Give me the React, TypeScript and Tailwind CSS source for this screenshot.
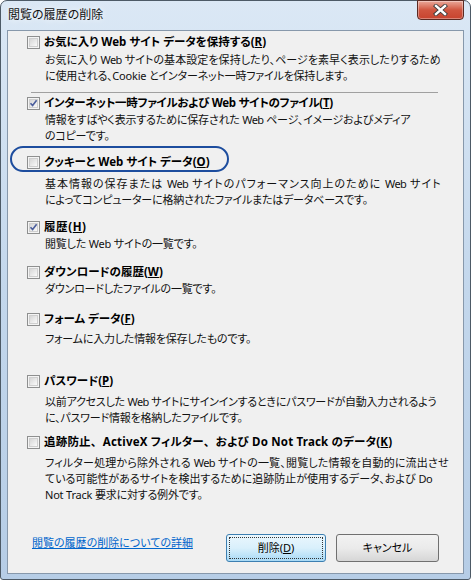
import React from 'react';

interface Line {
  text: string;
  // full lines are stretched to the width they have in the dialog
  fit?: string;
}

interface Item {
  label: React.ReactNode;
  labelCls?: string;
  desc: Line[];
  checked?: boolean;
  top: number;
  descTop: number;
  ring?: boolean;
}

const Check = ({ checked }: { checked?: boolean }) => (
  <span className="relative w-[13px] h-[13px] shrink-0 border border-[#8e8f8f] bg-[#f4f4f4]">
    <span className="absolute inset-[1px] border border-[#cfcfcf] bg-gradient-to-br from-[#d6d6d6] to-[#fafafa]" />
    {checked && (
      <svg className="absolute inset-0" width="11" height="11" viewBox="0 0 11 11">
        <path d="M2.5 5.2 L4.6 7.6 L8.6 2.2" fill="none" stroke="#4b5e9c" strokeWidth="1.6" />
      </svg>
    )}
  </span>
);

const Comma = () => <span className="mr-[6px]">、</span>;

const items: Item[] = [
  {
    label: <>お気に入り Web サイト データを保持する(<u>R</u>)</>,
    desc: [
      { text: 'お気に入り Web サイトの基本設定を保持したり、ページを素早く表示したりするため', fit: 'w-[395px]' },
      { text: 'に使用される、Cookie とインターネット一時ファイルを保持します。' },
    ],
    top: 3,
    descTop: 2,
  },
  {
    label: <>インターネット一時ファイルおよび Web サイトのファイル(<u>T</u>)</>,
    labelCls: 'tracking-[-0.3px]',
    desc: [
      { text: '情報をすばやく表示するために保存された Web ページ、イメージおよびメディア', fit: 'w-[365px]' },
      { text: 'のコピーです。' },
    ],
    checked: true,
    top: 2,
    descTop: 1,
  },
  {
    label: <>クッキーと Web サイト データ(<u>O</u>)</>,
    desc: [
      { text: '基本情報の保存または Web サイトのパフォーマンス向上のために Web サイト', fit: 'w-[395px]' },
      { text: 'によってコンピューターに格納されたファイルまたはデータベースです。' },
    ],
    top: 10,
    descTop: 6,
    ring: true,
  },
  {
    label: <>履歴(<u>H</u>)</>,
    labelCls: 'tracking-[0.6px]',
    desc: [{ text: '閲覧した Web サイトの一覧です。' }],
    checked: true,
    top: 11,
    descTop: 1,
  },
  {
    label: <>ダウンロードの履歴(<u>W</u>)</>,
    desc: [{ text: 'ダウンロードしたファイルの一覧です。' }],
    top: 12,
    descTop: 1,
  },
  {
    label: <>フォーム データ(<u>F</u>)</>,
    desc: [{ text: 'フォームに入力した情報を保存したものです。' }],
    top: 14,
    descTop: 4,
  },
  {
    label: <>パスワード(<u>P</u>)</>,
    desc: [
      { text: '以前アクセスした Web サイトにサインインするときにパスワードが自動入力されるよう', fit: 'w-[391px]' },
      { text: 'に、パスワード情報を格納したファイルです。' },
    ],
    top: 26,
    descTop: 5,
  },
  {
    label: <>追跡防止<Comma />ActiveX フィルター<Comma />および Do Not Track のデータ(<u>K</u>)</>,
    labelCls: 'tracking-[0.2px]',
    desc: [
      { text: 'フィルター処理から除外される Web サイトの一覧、閲覧した情報を自動的に流出させ', fit: 'w-[403px]' },
      { text: 'ている可能性があるサイトを検出するために追跡防止が使用するデータ、および Do', fit: 'w-[387px]' },
      { text: 'Not Track 要求に対する例外です。' },
    ],
    top: 8,
    descTop: 5,
  },
];

export default function App() {
  return (
    <div className="w-[471px] h-[580px] overflow-hidden bg-white">
      <div className="relative w-[471px] h-[580px] rounded-t-[7px] rounded-b-[3px] border border-[#4d5a66] bg-gradient-to-b from-[#dbe8f5] via-[#c3d7ec] to-[#b6cde6] font-['Noto_Sans','Noto_Sans_CJK_JP',sans-serif] [font-feature-settings:'palt'] text-[11px] text-black">
        {/* title bar */}
        <div className="h-[29px] flex items-start pl-[7px] pt-[5px]">
          <span className="text-[12px] leading-[17px] text-[#111] [text-shadow:0_0_6px_#ffffff]">閲覧の履歴の削除</span>
        </div>
        <div className="absolute right-[6px] top-[-1px] w-[47px] h-[20px] rounded-b-[4px] border border-[#5a2a22] bg-gradient-to-b from-[#e9a89a] via-[#d0553f] to-[#c7432e] flex items-center justify-center shadow-[inset_0_0_0_1px_rgba(255,255,255,0.35)]">
          <svg width="15" height="12" viewBox="0 0 15 12">
            <path d="M3 2 L12 10 M12 2 L3 10" stroke="#3b3b3b" strokeWidth="4.2" strokeLinecap="square" />
            <path d="M3 2 L12 10 M12 2 L3 10" stroke="#ffffff" strokeWidth="2.4" strokeLinecap="square" />
          </svg>
        </div>

        {/* client area */}
        <div className="mx-[6px] h-[544px] overflow-hidden border border-[#8798ab] bg-[#f0f0f0] flex flex-col">
          <div className="pl-[19px] pr-[20px] flex flex-col">
            {items.map((it, i) => (
              <React.Fragment key={i}>
                <div className="relative flex items-center gap-[4px] h-[16px]" style={{ marginTop: it.top }}>
                  {it.ring && (
                    <span className="absolute left-[-17px] top-[-8px] w-[219px] h-[26px] rounded-full border-2 border-[#1d4d9e]" />
                  )}
                  <Check checked={it.checked} />
                  <span className={`font-bold text-[11.5px] leading-[16px] whitespace-nowrap ${it.labelCls ?? ''}`}>{it.label}</span>
                </div>
                <div className="pl-[18px] leading-[16px] text-[#111] whitespace-nowrap" style={{ marginTop: it.descTop }}>
                  {it.desc.map((d, j) =>
                    d.fit ? (
                      <div key={j} className={`${d.fit} tracking-[-0.6px] text-justify [text-align-last:justify]`}>
                        {d.text}
                      </div>
                    ) : (
                      <div key={j} className="tracking-[-0.2px]">{d.text}</div>
                    )
                  )}
                </div>
                {i === 0 && <div className="mt-[8px] ml-[4px] w-[407px] h-px bg-[#a0a0a0]" />}
              </React.Fragment>
            ))}
          </div>

          {/* footer */}
          <div className="mt-auto mb-[11px] flex items-center pl-[24px] pr-[24px]">
            <a href="#" className="text-[#0066cc] underline leading-[16px] mb-[10px]">閲覧の履歴の削除についての詳細</a>
            <div className="ml-auto flex gap-[10px]">
              <button className="w-[100px] h-[28px] rounded-[3px] border border-[#3c7fb1] bg-gradient-to-b from-[#eaf6fd] via-[#d9f0fc] to-[#a7d9f5] p-[2px]">
                <span className="flex w-full h-full items-center justify-center border border-dotted border-[#333]">
                  削除(<u>D</u>)
                </span>
              </button>
              <button className="w-[103px] h-[28px] rounded-[3px] border border-[#707070] bg-gradient-to-b from-[#f2f2f2] via-[#ebebeb] to-[#d6d6d6] flex items-center justify-center">
                キャンセル
              </button>
            </div>
          </div>
        </div>
      </div>
    </div>
  );
}
